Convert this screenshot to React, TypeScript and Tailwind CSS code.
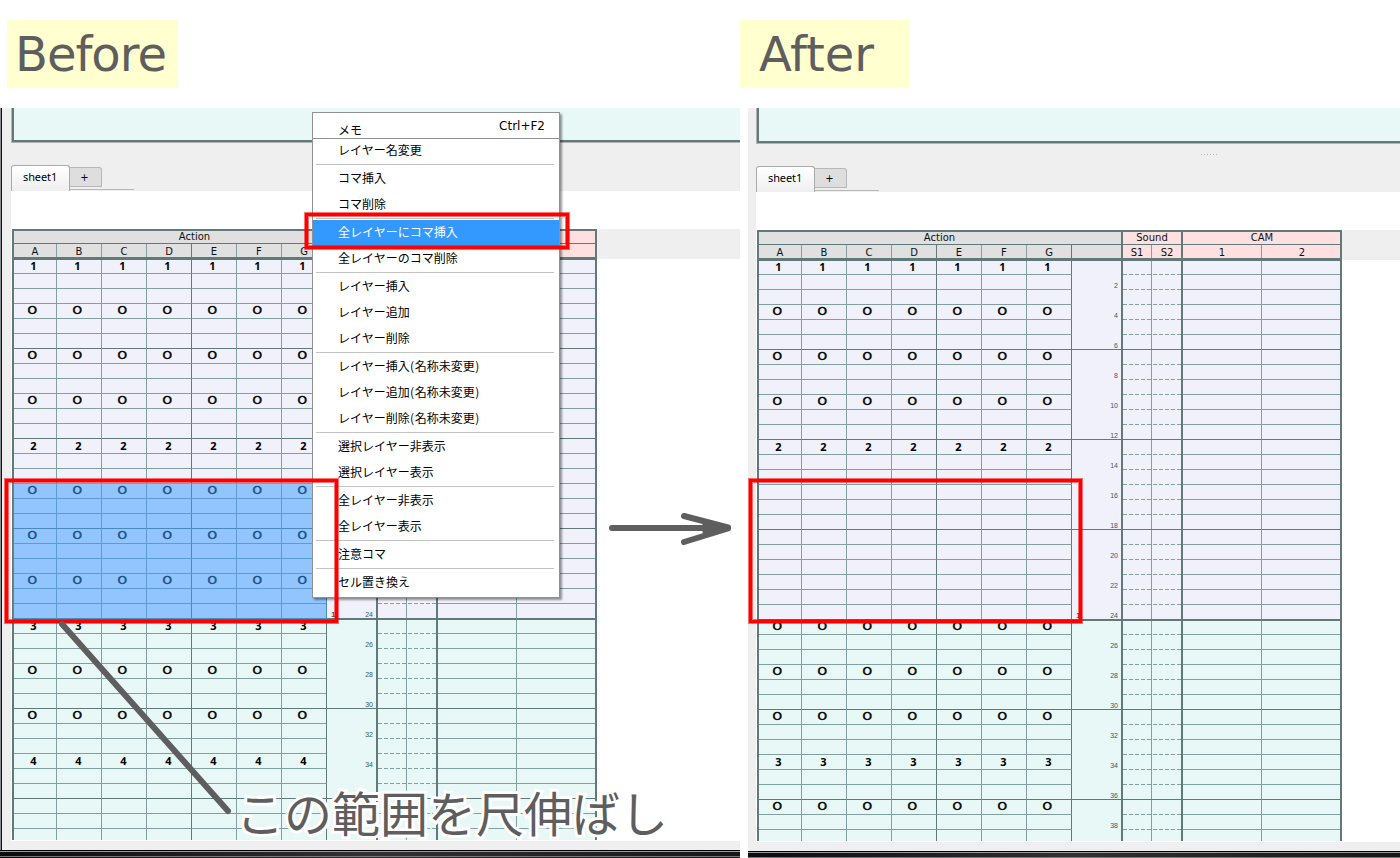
import React from "react";
import clsx from "clsx";

type Marks = Record<number, string>;

type SheetPanelProps = {
  marks: Marks;
  className?: string;
  gutterClassName: string;
  previewClassName: string;
  menuOpen?: boolean;
};

type MenuEntry = {
  label?: string;
  active?: boolean;
};

const LAYERS = ["A", "B", "C", "D", "E", "F", "G"];
const FRAMES = Array.from({ length: 39 }, (_, index) => index + 1);

const BEFORE_MARKS: Marks = {
  1: "1",
  4: "O",
  7: "O",
  10: "O",
  13: "2",
  16: "O",
  19: "O",
  22: "O",
  25: "3",
  28: "O",
  31: "O",
  34: "4",
};

const AFTER_MARKS: Marks = {
  1: "1",
  4: "O",
  7: "O",
  10: "O",
  13: "2",
  25: "O",
  28: "O",
  31: "O",
  34: "3",
  37: "O",
};

// Entries without a label are separators.
const MENU: MenuEntry[] = [
  {},
  { label: "コマ挿入" },
  { label: "コマ削除" },
  {},
  { label: "全レイヤーにコマ挿入", active: true },
  { label: "全レイヤーのコマ削除" },
  {},
  { label: "レイヤー挿入" },
  { label: "レイヤー追加" },
  { label: "レイヤー削除" },
  {},
  { label: "レイヤー挿入(名称未変更)" },
  { label: "レイヤー追加(名称未変更)" },
  { label: "レイヤー削除(名称未変更)" },
  {},
  { label: "選択レイヤー非表示" },
  { label: "選択レイヤー表示" },
  {},
  { label: "全レイヤー非表示" },
  { label: "全レイヤー表示" },
  {},
  { label: "注意コマ" },
  {},
  { label: "セル置き換え" },
];

function layerWidth(index: number) {
  return index === 0 ? "w-[43px]" : "w-[45px]";
}

function layerBorder(index: number) {
  return index === 3 || index === 6
    ? "border-r border-r-[#617979]"
    : "border-r border-r-[#82a0a0]";
}

// The open menu lies over the Sound and CAM titles, so they are left out then.
function SheetHeader({ menuOpen }: { menuOpen: boolean }) {
  return (
    <div className="flex h-[31px] w-[585px] border-x-2 border-t-2 border-b-[3px] border-[#617979] text-[10px] text-[#111] [font-family:'DejaVu_Sans',sans-serif]">
      <div className="w-[362px] bg-[#e0e0e0]">
        <div className="h-[13px] border-b border-[#617979] pr-px text-center leading-[11px]">
          Action
        </div>
        <div className="flex h-[13px]">
          {LAYERS.map((layer, index) => (
            <div
              className={clsx(
                "text-center leading-[15px]",
                layerWidth(index),
                layerBorder(index),
              )}
              key={layer}
            >
              {layer}
            </div>
          ))}
        </div>
      </div>
      <div className="w-[62px] border-x-2 border-[#617979] bg-[#ffe0e0]">
        <div className="h-[13px] border-b border-[#617979] text-center leading-[11px]">
          {!menuOpen && "Sound"}
        </div>
        <div className="flex h-[13px] text-center leading-[15px]">
          <div className="w-[29px] border-r border-[#82a0a0]">
            {!menuOpen && "S1"}
          </div>
          <div className="flex-1 pl-px">{!menuOpen && "S2"}</div>
        </div>
      </div>
      <div className="flex-1 bg-[#ffe0e0]">
        <div className="h-[13px] border-b border-[#617979] pl-px text-center leading-[11px]">
          {!menuOpen && "CAM"}
        </div>
        <div className="flex h-[13px] text-center leading-[15px]">
          <div className="w-[79px] border-r border-[#82a0a0]">
            {!menuOpen && "1"}
          </div>
          <div className="flex-1 pl-0.5">{!menuOpen && "2"}</div>
        </div>
      </div>
    </div>
  );
}

type FrameRowProps = {
  frame: number;
  mark?: string;
  showNumber: boolean;
};

function FrameRow({ frame, mark, showNumber }: FrameRowProps) {
  const isSecond = frame === 24;
  const isMajor = frame % 6 === 0;
  const line = isSecond
    ? "border-b-2 border-b-[#617979]"
    : isMajor
      ? "border-b border-b-[#617979]"
      : "border-b border-b-[#82a0a0]";

  return (
    <div
      className={clsx(
        "flex w-[585px] shrink-0 border-x-2 border-x-[#617979]",
        frame <= 24 ? "bg-[#f1f1fc]" : "bg-[#e7f8f7]",
        isSecond ? "h-4" : frame === 1 || frame === 25 ? "h-3.5" : "h-[15px]",
      )}
    >
      {LAYERS.map((layer, index) => (
        <div
          className={clsx(
            "flex items-end justify-center text-black",
            layerWidth(index),
            layerBorder(index),
            line,
          )}
          key={layer}
        >
          {mark === "O" ? (
            <span
              className={clsx(
                "h-3.5 text-[11px] leading-[13px] [font-family:'DejaVu_Sans',sans-serif] [-webkit-text-stroke:0.5px_black]",
                index === 0 ? "pr-[5px]" : "pr-[3px]",
              )}
            >
              <span className="inline-block scale-x-110">O</span>
            </span>
          ) : mark ? (
            <span
              className={clsx(
                "h-3.5 text-[11px] leading-[13px] font-bold [font-family:'Noto_Sans',sans-serif]",
                index === 0
                  ? "pr-[3px]"
                  : mark === "1"
                    ? "pr-[3px]"
                    : "pr-px",
              )}
            >
              {mark}
            </span>
          ) : null}
        </div>
      ))}
      <div
        className={clsx(
          "flex w-[49px] items-end justify-between pr-[3px] pl-1 text-[7px] leading-[7px] text-[#3f5858] [font-family:'Liberation_Sans',sans-serif]",
          isMajor ? line : "pb-px",
        )}
      >
        <span className="text-[8px] font-bold">{isSecond ? "1" : ""}</span>
        <span>{showNumber && frame % 2 === 0 ? frame : ""}</span>
      </div>
      <div
        className={clsx(
          "flex w-[62px] items-end border-x-2 border-x-[#617979]",
          isMajor && line,
        )}
      >
        <div className="flex h-full w-[29px] items-end border-r border-r-[#82a0a0]">
          {!isMajor && (
            <div className="h-px w-full bg-[repeating-linear-gradient(90deg,#82a0a0_0_4px,transparent_4px_6px)]" />
          )}
        </div>
        {!isMajor && (
          <div className="h-px flex-1 bg-[repeating-linear-gradient(90deg,transparent_0_1px,#82a0a0_1px_5px,transparent_5px_6px)]" />
        )}
      </div>
      <div className={clsx("w-[79px] border-r border-r-[#82a0a0]", line)} />
      <div className={clsx("flex-1", line)} />
    </div>
  );
}

function SheetTabs() {
  return (
    <div className="flex h-[26px] text-black">
      <div className="h-full w-[59px] rounded-t-[3px] border border-b-0 border-[#aaa] bg-gradient-to-b from-white to-[#efefef] pl-[11px] text-[11px] leading-[21px] tracking-[-0.1px] [font-family:'Noto_Sans',sans-serif]">
        sheet1
      </div>
      <div className="flex h-[25px] w-16 flex-col justify-between border-b border-[#b8b8b8] pt-0.5">
        <div className="h-5 w-8 rounded-tr-[3px] border border-l-0 border-[#b8b8b8] bg-[#dedede] pr-0.5 text-center text-[10px] leading-[19px] [font-family:'DejaVu_Sans',sans-serif]">
          +
        </div>
      </div>
    </div>
  );
}

function SheetPanel({
  marks,
  className,
  gutterClassName,
  previewClassName,
  menuOpen = false,
}: SheetPanelProps) {
  return (
    <section
      className={clsx("flex h-[750px] flex-col bg-[#efefef]", className)}
    >
      <div className="flex min-h-0 flex-1">
        <div className={clsx("shrink-0", gutterClassName)} />
        <div className="flex min-w-0 flex-1 flex-col">
          <div
            className={clsx(
              "shrink-0 border-b border-l border-[#b0b4b4]",
              previewClassName,
            )}
          >
            <div className="h-full border-b-2 border-l-2 border-[#617979] bg-[#e7f8f7]" />
          </div>
          <div className="flex h-[22px] shrink-0 justify-center pt-2.5 pl-[262px]">
            {!menuOpen && (
              <div className="h-px w-[17px] bg-[repeating-linear-gradient(90deg,#bbb_0_1px,transparent_1px_3px)]" />
            )}
          </div>
          <SheetTabs />
          <div className="flex min-h-0 flex-1 flex-col overflow-hidden bg-white pt-[38px] pb-px">
            <div className="flex h-[31px] shrink-0 pl-px">
              <SheetHeader menuOpen={menuOpen} />
              <div className="h-[30px] flex-1 bg-[#efefef]" />
            </div>
            <div className="flex min-h-0 flex-1 flex-col overflow-hidden pl-px">
              {FRAMES.map((frame) => (
                <FrameRow
                  frame={frame}
                  key={frame}
                  mark={marks[frame]}
                  showNumber={!menuOpen || frame >= 24}
                />
              ))}
            </div>
          </div>
          <div className="h-[9px] shrink-0" />
        </div>
      </div>
      <div className="h-2 shrink-0 border-t border-black bg-gradient-to-r from-[#0c0b10] via-[#343034] to-[#161618]">
        <div className="h-px bg-[#999]" />
        <div className="mt-1 h-px bg-[#777]" />
      </div>
    </section>
  );
}

function ContextMenu() {
  return (
    <div className="absolute top-[112px] left-[312px] h-[486px] w-[248px] border border-[#8f9292] bg-white text-xs text-black shadow-[2px_2px_2px_rgba(0,0,0,0.4)] [font-family:'DejaVu_Sans','Noto_Sans_CJK_JP',sans-serif]">
      <div className="flex h-[26px] justify-between border-b border-[#8f9292] pr-3.5 pl-[25px]">
        <span className="pt-2 leading-[18px] [font-family:'Noto_Sans_CJK_JP',sans-serif]">
          メモ
        </span>
        <span className="leading-[27px]">Ctrl+F2</span>
      </div>
      <div className="h-6 pl-[25px] leading-[22px] [font-family:'Noto_Sans_CJK_JP',sans-serif]">
        レイヤー名変更
      </div>
      {MENU.map((entry, index) =>
        entry.label ? (
          <div
            className={clsx(
              "h-[26px] pl-[25px] [font-family:'Noto_Sans_CJK_JP',sans-serif]",
              entry.active
                ? "mt-px -mb-px bg-[#3399ff] leading-[23px] text-white"
                : "leading-[26px]",
            )}
            key={index}
          >
            {entry.label.split(/([()])/).map((part, partIndex) =>
              part === "(" || part === ")" ? (
                <span className="inline-block w-[5px] text-center" key={partIndex}>
                  {part}
                </span>
              ) : (
                part
              ),
            )}
          </div>
        ) : (
          <div className="h-0.5 pt-px pr-[5px] pl-[3px]" key={index}>
            <div className="h-px bg-[#c3c3c3]" />
          </div>
        ),
      )}
    </div>
  );
}

function RedFrame({ className }: { className: string }) {
  return (
    <div
      className={clsx(
        "absolute border-[3px] border-[#ff0000] shadow-[0_0_0_1px_rgba(255,0,0,0.55),inset_0_0_0_1px_rgba(255,0,0,0.55)]",
        className,
      )}
    />
  );
}

export default function App() {
  return (
    <main className="relative h-[858px] w-[1400px] overflow-hidden bg-white">
      <header className="flex h-[108px] pt-5 pl-[7px] text-[48px] leading-[68px] text-[#5e5e5e] [font-family:'DejaVu_Sans',sans-serif]">
        <h1 className="h-[68px] w-[171px] bg-[#ffffcf] pl-2 tracking-[-1px]">
          Before
        </h1>
        <h1 className="ml-[562px] h-[68px] w-[169px] bg-[#ffffcf] pl-[19px] tracking-[-0.1px]">
          After
        </h1>
      </header>

      <div className="flex gap-2">
        <SheetPanel
          className="w-[740px]"
          gutterClassName="w-[11px] bg-[linear-gradient(90deg,#8a8d90_0_1px,#111_1px_2px,#efefef_2px)]"
          marks={BEFORE_MARKS}
          menuOpen
          previewClassName="h-[35px]"
        />
        <SheetPanel
          className="w-[652px] [&>div:last-child]:h-[7px]"
          gutterClassName="w-2"
          marks={AFTER_MARKS}
          previewClassName="h-9"
        />
      </div>

      <div className="absolute top-[484px] left-[13px] h-[135px] w-[314px] bg-[#3399ff]/50" />
      <ContextMenu />

      <RedFrame className="top-[479px] left-[5px] h-[144px] w-[333px]" />
      <RedFrame className="top-[213px] left-[305px] h-[36px] w-[264px]" />
      <RedFrame className="top-[479px] left-[749px] h-[144px] w-[333px]" />

      <svg
        className="absolute top-0 left-0"
        fill="none"
        height="858"
        stroke="#5e5e5e"
        strokeLinecap="round"
        strokeLinejoin="round"
        strokeWidth="6"
        viewBox="0 0 1400 858"
        width="1400"
      >
        <path d="M62 624 228 811" />
        <path d="M612 528H728M684 516 728 527.500M684 542 728 528.500" />
        <path d="M704 524 727 528 704 532Z" fill="#5e5e5e" strokeWidth="3" />
      </svg>

      <p className="absolute top-[777px] left-[236px] text-[48px] leading-[68px] whitespace-nowrap text-[#5e5e5e] [-webkit-text-stroke:6px_white] [font-family:'Noto_Sans_CJK_JP',sans-serif] [paint-order:stroke_fill]">
        この範囲を尺伸ばし
      </p>
    </main>
  );
}
